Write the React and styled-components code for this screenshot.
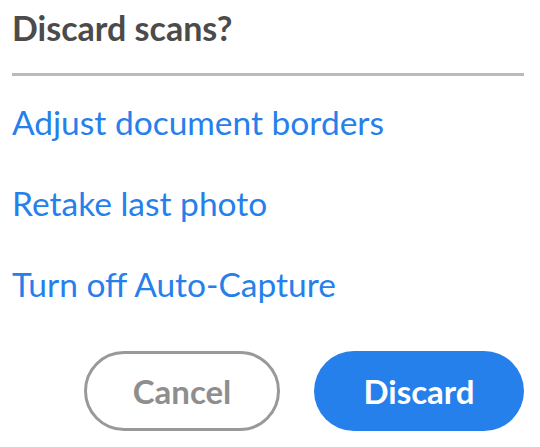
import React from "react";
import styled, { createGlobalStyle } from "styled-components";

const GlobalStyle = createGlobalStyle`
  html, body {
    margin: 0;
    padding: 0;
    background: #ffffff;
  }
  body {
    font-family: Lato, "Open Sans", sans-serif;
  }
`;

const Dialog = styled.div`
  width: 540px;
  box-sizing: border-box;
  padding: 8px 16px 0 12px;
  display: flex;
  flex-direction: column;
`;

const Title = styled.h2`
  margin: 0;
  font-size: 34px;
  line-height: 40px;
  font-weight: 700;
  color: #4b4b4b;
`;

const Divider = styled.hr`
  margin: 25px 0 0;
  border: none;
  height: 3px;
  background: #bababa;
`;

const Options = styled.div`
  display: flex;
  flex-direction: column;
  gap: 41px;
  margin-top: 26px;
`;

const Option = styled.div`
  font-size: 33.5px;
  line-height: 40px;
  color: #2680eb;
  cursor: pointer;
`;

const Actions = styled.div`
  display: flex;
  justify-content: flex-end;
  gap: 34px;
  margin-top: 47px;
`;

const Button = styled.button`
  box-sizing: border-box;
  height: 80px;
  width: ${(p) => p.width}px;
  border-radius: 40px;
  font-family: Lato, "Open Sans", sans-serif;
  font-size: 33px;
  line-height: 40px;
  font-weight: 700;
  padding: 0;
  cursor: pointer;
  border: ${(p) => (p.primary ? "none" : "3px solid #999999")};
  background: ${(p) => (p.primary ? "#2680eb" : "#ffffff")};
  color: ${(p) => (p.primary ? "#ffffff" : "#8e8e8e")};
`;

const options = [
  "Adjust document borders",
  "Retake last photo",
  "Turn off Auto-Capture",
];

export default function App() {
  return (
    <>
      <GlobalStyle />
      <Dialog>
        <Title>Discard scans?</Title>
        <Divider />
        <Options>
          {options.map((o) => (
            <Option key={o}>{o}</Option>
          ))}
        </Options>
        <Actions>
          <Button width={196}>Cancel</Button>
          <Button width={210} primary>
            Discard
          </Button>
        </Actions>
      </Dialog>
    </>
  );
}
